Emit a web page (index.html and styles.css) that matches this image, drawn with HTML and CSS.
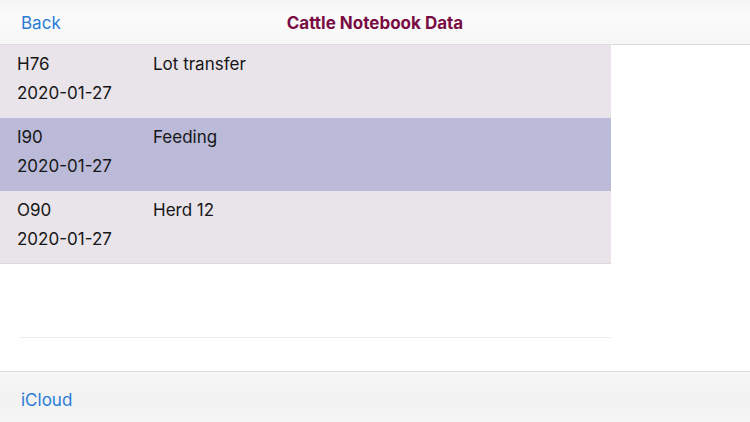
FILE: index.html
```html
<!DOCTYPE html>
<html>
<head>
<meta charset="utf-8">
<title>Cattle Notebook Data</title>
<link rel="stylesheet" href="styles.css">
</head>
<body>
<div class="app">
  <header class="navbar">
    <a class="nav-link back">Back</a>
    <h1 class="title">Cattle Notebook Data</h1>
  </header>
  <main class="content">
    <div class="table">
      <div class="row">
        <div class="cell-top"><span class="tag">H76</span><span class="desc">Lot transfer</span></div>
        <div class="date">2020-01-27</div>
      </div>
      <div class="row selected">
        <div class="cell-top"><span class="tag">I90</span><span class="desc">Feeding</span></div>
        <div class="date">2020-01-27</div>
      </div>
      <div class="row last">
        <div class="cell-top"><span class="tag">O90</span><span class="desc">Herd 12</span></div>
        <div class="date">2020-01-27</div>
      </div>
      <div class="empty-row"></div>
    </div>
  </main>
  <footer class="toolbar">
    <a class="nav-link">iCloud</a>
  </footer>
</div>
</body>
</html>
```
FILE: styles.css
```css
* { box-sizing: border-box; }
html, body { margin: 0; padding: 0; }
body {
  width: 750px;
  height: 422px;
  overflow: hidden;
  background: #ffffff;
  font-family: Inter, "Liberation Sans", Arial, sans-serif;
  color: #111;
}
.app {
  display: flex;
  flex-direction: column;
  height: 422px;
}
.navbar {
  height: 45px;
  flex: 0 0 45px;
  display: flex;
  align-items: center;
  position: relative;
  padding: 2px 21px 0;
  background: linear-gradient(#f5f5f5, #fbfbfb 40%, #f6f6f6);
  border-bottom: 1px solid #dcdcdc;
}
.nav-link {
  color: #2a7bd6;
  font-size: 17px;
  text-decoration: none;
}
.title {
  position: absolute;
  left: 0;
  right: 0;
  top: 0;
  height: 44px;
  margin: 0;
  padding-top: 2px;
  display: flex;
  align-items: center;
  justify-content: center;
  font-size: 17px;
  font-weight: 700;
  color: #7a0c44;
  pointer-events: none;
}
.content {
  flex: 1;
}
.table {
  width: 611px;
}
.row {
  height: 73px;
  background: #e9e3ea;
  padding: 5px 0 0 17px;
  font-size: 17px;
  line-height: 29px;
  color: #161616;
}
.row.selected {
  background: #bbbbd9;
}
.row.last {
  border-bottom: 1px solid #dcd8dc;
}
.cell-top {
  display: flex;
}
.tag {
  width: 136px;
}
.empty-row {
  height: 74px;
  margin-left: 20px;
  border-bottom: 1px solid #ececec;
}
.toolbar {
  height: 51px;
  flex: 0 0 51px;
  display: flex;
  align-items: center;
  padding: 5px 21px 0;
  background: linear-gradient(#f6f6f6, #f2f2f2 50%, #f5f5f5);
  border-top: 1px solid #dedede;
}
```
